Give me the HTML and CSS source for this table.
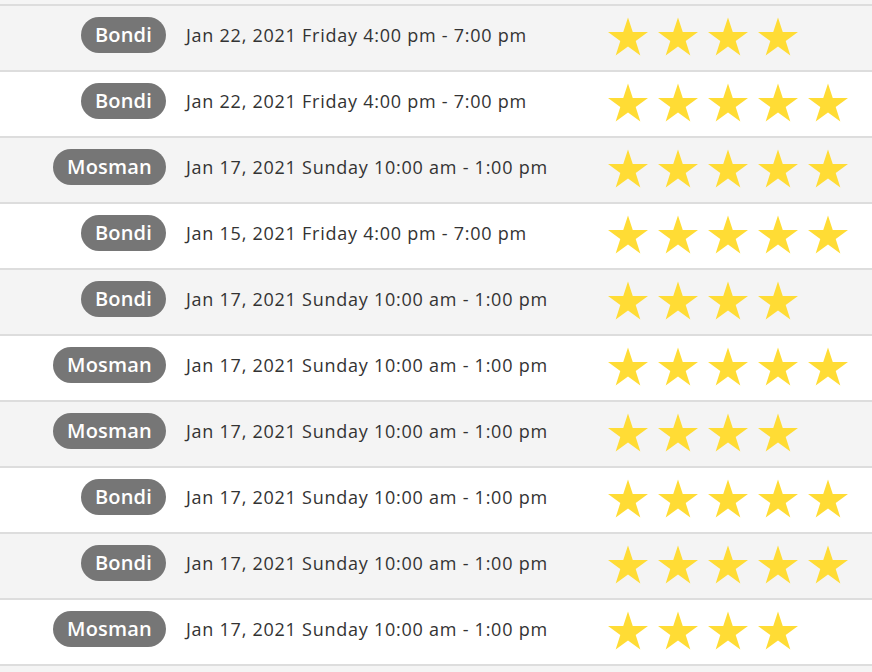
FILE: index.html
```html
<!DOCTYPE html>
<html>
<head>
<meta charset="utf-8">
<link rel="stylesheet" href="styles.css">
</head>
<body>
<svg width="0" height="0" class="defs">
  <defs>
    <symbol id="star" viewBox="0 0 40 39">
      <path d="M20 0.5L24.76 14.95L39.97 15.01L27.7 24L32.34 38.49L20 29.6L7.66 38.49L12.3 24L0.03 15.01L15.24 14.95Z"/>
    </symbol>
  </defs>
</svg>
<div class="list">
  <div class="row gray"><div class="loc"><span class="badge">Bondi</span></div><div class="date">Jan 22, 2021 Friday 4:00 pm - 7:00 pm</div><div class="stars" data-n="4"></div></div>
  <div class="row"><div class="loc"><span class="badge">Bondi</span></div><div class="date">Jan 22, 2021 Friday 4:00 pm - 7:00 pm</div><div class="stars" data-n="5"></div></div>
  <div class="row gray"><div class="loc"><span class="badge">Mosman</span></div><div class="date">Jan 17, 2021 Sunday 10:00 am - 1:00 pm</div><div class="stars" data-n="5"></div></div>
  <div class="row"><div class="loc"><span class="badge">Bondi</span></div><div class="date">Jan 15, 2021 Friday 4:00 pm - 7:00 pm</div><div class="stars" data-n="5"></div></div>
  <div class="row gray"><div class="loc"><span class="badge">Bondi</span></div><div class="date">Jan 17, 2021 Sunday 10:00 am - 1:00 pm</div><div class="stars" data-n="4"></div></div>
  <div class="row"><div class="loc"><span class="badge">Mosman</span></div><div class="date">Jan 17, 2021 Sunday 10:00 am - 1:00 pm</div><div class="stars" data-n="5"></div></div>
  <div class="row gray"><div class="loc"><span class="badge">Mosman</span></div><div class="date">Jan 17, 2021 Sunday 10:00 am - 1:00 pm</div><div class="stars" data-n="4"></div></div>
  <div class="row"><div class="loc"><span class="badge">Bondi</span></div><div class="date">Jan 17, 2021 Sunday 10:00 am - 1:00 pm</div><div class="stars" data-n="5"></div></div>
  <div class="row gray"><div class="loc"><span class="badge">Bondi</span></div><div class="date">Jan 17, 2021 Sunday 10:00 am - 1:00 pm</div><div class="stars" data-n="5"></div></div>
  <div class="row"><div class="loc"><span class="badge">Mosman</span></div><div class="date">Jan 17, 2021 Sunday 10:00 am - 1:00 pm</div><div class="stars" data-n="4"></div></div>
  <div class="row gray"></div>
</div>
<script src="app.js"></script>
</body>
</html>
```
FILE: app.js
```js
document.querySelectorAll('.stars').forEach(function (el) {
  var n = parseInt(el.getAttribute('data-n'), 10);
  var html = '';
  for (var i = 0; i < n; i++) {
    html += '<svg class="star" viewBox="0 0 40 39"><use href="#star"/></svg>';
  }
  el.innerHTML = html;
});
```
FILE: styles.css
```css
html, body {
  margin: 0;
  padding: 0;
}
body {
  background: #f5f5f5;
  font-family: "Open Sans", "Noto Sans", sans-serif;
  color: #333;
  width: 872px;
  height: 672px;
  overflow: hidden;
}
.defs {
  position: absolute;
}
.list {
  padding-top: 4px;
}
.row {
  display: flex;
  align-items: center;
  height: 66px;
  box-sizing: border-box;
  border-top: 2px solid #dddddd;
  background: #ffffff;
  padding-bottom: 7px;
}
.row.gray {
  background: #f4f4f4;
}
.loc {
  width: 166px;
  display: flex;
  justify-content: flex-end;
  flex-shrink: 0;
}
.badge {
  display: inline-block;
  background: #767676;
  color: #ffffff;
  font-size: 20px;
  font-weight: 600;
  letter-spacing: 0.2px;
  height: 36px;
  line-height: 36px;
  padding: 0 14px;
  border-radius: 18px;
}
.date {
  margin-left: 20px;
  width: 422px;
  flex-shrink: 0;
  font-size: 18px;
  letter-spacing: 0.75px;
  color: #333;
}
.stars {
  display: flex;
  gap: 10px;
  margin-top: 4px;
}
.star {
  width: 40px;
  height: 39px;
  fill: #ffdc35;
}
```
